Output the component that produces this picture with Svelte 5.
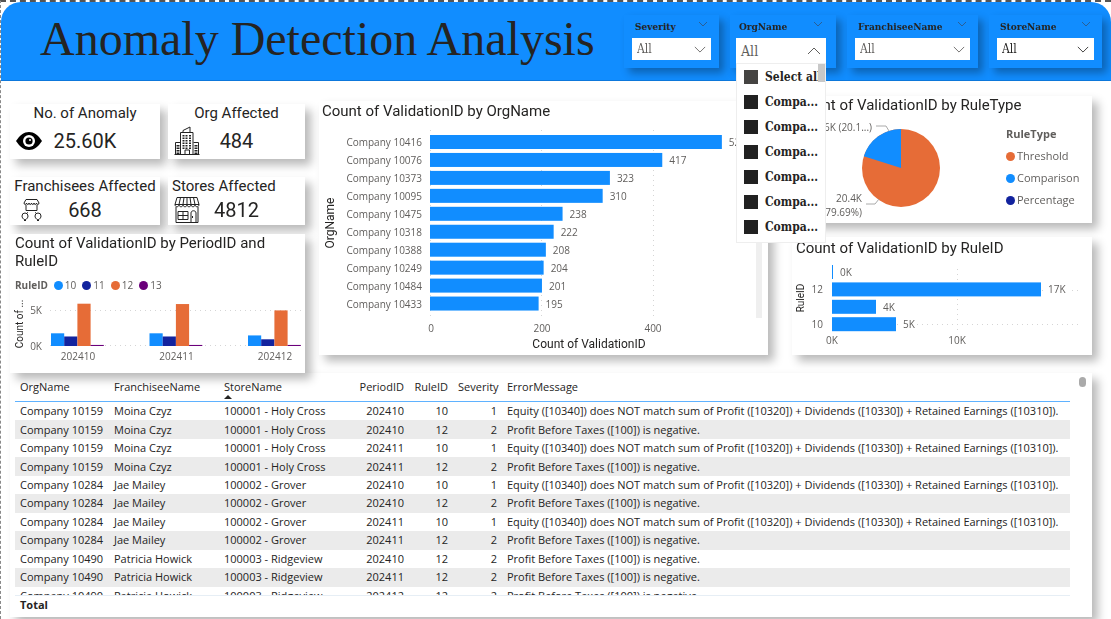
<script>
  const kpis = [
    { label: 'No. of Anomaly', value: '25.60K', icon: 'eye' },
    { label: 'Org Affected', value: '484', icon: 'building' },
    { label: 'Franchisees Affected', value: '668', icon: 'franchise' },
    { label: 'Stores Affected', value: '4812', icon: 'store' }
  ];

  const orgOptions = ['Select all', 'Compa...', 'Compa...', 'Compa...', 'Compa...', 'Compa...', 'Compa...'];

  const ruleColors = [
    { id: '10', color: '#118dff' },
    { id: '11', color: '#12239e' },
    { id: '12', color: '#e66c37' },
    { id: '13', color: '#6b007b' }
  ];

  const periods = [
    { id: '202410', values: [1800, 1350, 6000, 150] },
    { id: '202411', values: [1800, 1350, 5950, 150] },
    { id: '202412', values: [1500, 950, 5050, 150] }
  ];

  const orgs = [
    ['Company 10416', 524],
    ['Company 10076', 417],
    ['Company 10373', 323],
    ['Company 10095', 310],
    ['Company 10475', 238],
    ['Company 10318', 222],
    ['Company 10388', 208],
    ['Company 10249', 204],
    ['Company 10484', 201],
    ['Company 10433', 195]
  ];

  const rules = [
    { tick: '', width: 1, label: '0K' },
    { tick: '12', width: 209, label: '17K' },
    { tick: '', width: 44, label: '4K' },
    { tick: '10', width: 64, label: '5K' }
  ];

  const ruleTypes = [
    { name: 'Threshold', color: '#e66c37' },
    { name: 'Comparison', color: '#118dff' },
    { name: 'Percentage', color: '#12239e' }
  ];

  const equity = 'Equity ([10340]) does NOT match sum of Profit ([10320]) + Dividends ([10330]) + Retained Earnings ([10310]).';
  const profit = 'Profit Before Taxes ([100]) is negative.';

  const rows = [
    ['Company 10159', 'Moina Czyz', '100001 - Holy Cross', 202410, 10, 1, equity],
    ['Company 10159', 'Moina Czyz', '100001 - Holy Cross', 202410, 12, 2, profit],
    ['Company 10159', 'Moina Czyz', '100001 - Holy Cross', 202411, 10, 1, equity],
    ['Company 10159', 'Moina Czyz', '100001 - Holy Cross', 202411, 12, 2, profit],
    ['Company 10284', 'Jae Mailey', '100002 - Grover', 202410, 10, 1, equity],
    ['Company 10284', 'Jae Mailey', '100002 - Grover', 202410, 12, 2, profit],
    ['Company 10284', 'Jae Mailey', '100002 - Grover', 202411, 10, 1, equity],
    ['Company 10284', 'Jae Mailey', '100002 - Grover', 202411, 12, 2, profit],
    ['Company 10490', 'Patricia Howick', '100003 - Ridgeview', 202410, 12, 2, profit],
    ['Company 10490', 'Patricia Howick', '100003 - Ridgeview', 202411, 12, 2, profit],
    ['Company 10490', 'Patricia Howick', '100003 - Ridgeview', 202412, 12, 2, profit]
  ];
</script>

{#snippet chevron(up = false)}
  <svg class="chevron" viewBox="0 0 14 8" aria-hidden="true">
    <path d={up ? 'M1 7 7 1l6 6' : 'M1 1l6 6 6-6'} />
  </svg>
{/snippet}

{#snippet slicerHead(id, label)}
  <div class="slicer-head">
    <label for={id}>{label}</label>
    <svg viewBox="0 0 10 6" aria-hidden="true"><path d="M1 1l4 4 4-4" /></svg>
  </div>
{/snippet}

<div class="page">
  <header>
    <h1>Anomaly Detection Analysis</h1>
    <div class="slicers">
      <div class="slicer severity">
        {@render slicerHead('severity', 'Severity')}
        <div class="box">
          <select id="severity"><option>All</option></select>
          {@render chevron()}
        </div>
      </div>
      <div class="slicer org">
        {@render slicerHead('org', 'OrgName')}
        <div class="box open">
          <button id="org" type="button" aria-expanded="true">All</button>
          {@render chevron(true)}
          <div class="menu">
            {#each orgOptions as option, i}
              <label><input type="checkbox" class:all={i === 0} /><span>{option}</span></label>
            {/each}
            <div class="menu-thumb"></div>
          </div>
        </div>
      </div>
      <div class="slicer franchisee">
        {@render slicerHead('franchisee', 'FranchiseeName')}
        <div class="box">
          <select id="franchisee"><option>All</option></select>
          {@render chevron()}
        </div>
      </div>
      <div class="slicer store">
        {@render slicerHead('store', 'StoreName')}
        <div class="box dark">
          <select id="store"><option>All</option></select>
          {@render chevron()}
        </div>
      </div>
    </div>
  </header>

  <main>
    <div class="charts">
      <div class="left">
        <div class="kpis">
          {#each kpis as kpi}
            <section class="card kpi" class:start={kpi.icon === 'store'}>
              <h2>{kpi.label}</h2>
              <div class="kpi-row">
                {#if kpi.icon === 'eye'}
                  <svg width="26" height="20" viewBox="0 0 26 20" aria-hidden="true">
                    <path d="M0 10C4 4 8 1 13 1s9 3 13 9c-4 6-8 9-13 9S4 16 0 10z" fill="#000" />
                    <circle cx="13" cy="10" r="6" fill="#fff" />
                    <circle cx="13" cy="10" r="3.6" fill="#000" />
                    <circle cx="14" cy="9" r="1" fill="#fff" />
                  </svg>
                {:else if kpi.icon === 'building'}
                  <svg width="26" height="30" viewBox="0 0 26 30" fill="none" stroke="#222" aria-hidden="true">
                    <path d="M1.5 28.5V16.5h5M24.5 28.5V16.5h-5M0.5 28.5h25M6.5 28.5V6.500h12.5v22M9 6.500V4.500l7-3.500v5.500M11 28v-4h4.500v4" />
                    <path d="M9.500 9v14M12.500 9v14M16 9v14" stroke-width="2" stroke-dasharray="1.500 1" />
                    <path d="M4 19v9M22 19v9" stroke-width="3" stroke-dasharray="1.500 1" />
                  </svg>
                {:else if kpi.icon === 'franchise'}
                  <svg width="26" height="24" viewBox="0 0 26 24" fill="none" stroke="#222" aria-hidden="true">
                    <path d="M10 1.500h11l2 3.500c0 2-2.500 2-2.500 0 0 2-2.500 2-2.500 0 0 2-2.500 2-2.500 0 0 2-2.500 2-2.500 0 0 2-2.500 2-2.500 0 0 2-2.500 2-2.500 0zM10 7v5.500h11V7" />
                    <path d="M12 14l-2 2M19 14l2 2" stroke-dasharray="1 1" />
                    <path d="M9 22c-2-1-3-2.500-3-4a3 3 0 0 1 6 0c0 1.500-1 3-3 4zM22 22c-2-1-3-2.500-3-4a3 3 0 0 1 6 0c0 1.500-1 3-3 4zM8 22.500h2M21 22.500h2" />
                  </svg>
                {:else}
                  <svg width="26" height="26" viewBox="0 0 26 26" fill="none" stroke="#222" aria-hidden="true">
                    <path d="M3 .5h20l2 7c0 3-4 3-4 0 0 3-4 3-4 0 0 3-4 3-4 0 0 3-4 3-4 0 0 3-4 3-4 0 0 3-4 3-4 0zM6.500 .5L5 7.500M10 .5L9 7.500M13 .5v7M16 .5l1 7M19.500 .5L21 7.500M1 7.500h24" />
                    <path d="M2 10v15.500h22V10M4 14.500h10v8H4zM9 14.500v8M4 18.500h10M17 25V16c0-3 5-3 5 0v9M18.500 19v2" />
                  </svg>
                {/if}
                <strong>{kpi.value}</strong>
              </div>
            </section>
          {/each}
        </div>

        <section class="card period">
          <h2>Count of ValidationID by PeriodID and RuleID</h2>
          <div class="legend">
            <b>RuleID</b>
            {#each ruleColors as rule}
              <span><i style:background={rule.color}></i>{rule.id}</span>
            {/each}
          </div>
          <svg class="plot" viewBox="0 0 295 80" role="img" aria-label="Count by period and rule">
            <path class="grid" d="M40 17.500H291M40 52.500H291" />
            <text class="axis-title small" transform="translate(13 31) rotate(-90)" text-anchor="middle">Count of ...</text>
            <text x="32" y="21" text-anchor="end">5K</text>
            <text x="32" y="57" text-anchor="end">0K</text>
            {#each periods as period, p}
              {#each period.values as value, i}
                <rect
                  x={41 + p * 98.5 + i * 13.2}
                  y={53 - value * 0.00705}
                  width="13.2"
                  height={value * 0.00705}
                  fill={ruleColors[i].color}
                />
              {/each}
              <text x={68 + p * 98.5} y="67" text-anchor="middle">{period.id}</text>
            {/each}
          </svg>
        </section>
      </div>

      <section class="card byorg">
        <h2>Count of ValidationID by OrgName</h2>
        <svg class="plot" viewBox="0 0 449 235" role="img" aria-label="Count by organisation">
          <path class="grid" d="M111.500 10V198M222.500 10V198M334.500 10V198" />
          {#each orgs as [name, count], i}
            <text x="103" y={26 + i * 17.95} text-anchor="end">{name}</text>
            <rect x="111" y={15 + i * 17.95} width={count * 0.557} height="14" fill="#118dff" />
            <text x={118 + count * 0.557} y={26 + i * 17.95}>{count}</text>
          {/each}
          <text x="112" y="212" text-anchor="middle">0</text>
          <text x="223" y="212" text-anchor="middle">200</text>
          <text x="334" y="212" text-anchor="middle">400</text>
          <text class="axis-title" x="270" y="228" text-anchor="middle">Count of ValidationID</text>
          <text class="axis-title" transform="translate(15 103) rotate(-90)" text-anchor="middle">OrgName</text>
          <rect x="437" y="12" width="6" height="186" fill="#efefef" />
        </svg>
      </section>

      <div class="right">
        <section class="card bytype">
          <h2>Count of ValidationID by RuleType</h2>
          <div class="type-body">
            <svg class="pie" viewBox="0 0 200 109" role="img" aria-label="Count by rule type">
              <circle cx="109" cy="54" r="39" fill="#e66c37" />
              <path d="M109 54V15A39 39 0 0 0 71.8 42.300z" fill="#118dff" />
              <path d="M84 12h10l3 5M74 90h9l4-5" fill="none" stroke="#aaa" />
              <text x="80" y="17" text-anchor="end">5.16K (20.1...)</text>
              <text x="70" y="88" text-anchor="end">20.4K</text>
              <text x="70" y="102" text-anchor="end">(79.69%)</text>
            </svg>
            <div class="type-legend">
              <b>RuleType</b>
              {#each ruleTypes as type}
                <span><i style:background={type.color}></i>{type.name}</span>
              {/each}
            </div>
          </div>
        </section>

        <section class="card byrule">
          <h2>Count of ValidationID by RuleID</h2>
          <svg class="plot" viewBox="0 0 300 98" role="img" aria-label="Count by rule">
            <path class="grid" d="M165.500 12V73M40 33.500H286M40 67.500H286" />
            {#each rules as rule, i}
              <rect x="40" y={8 + i * 17.4} width={rule.width} height="14" fill="#118dff" />
              <rect x={rule.width + 46} y={8 + i * 17.4} width={rule.label.length * 7} height="14" fill="#fff" />
              <text x={rule.width + 47} y={19 + i * 17.4}>{rule.label}</text>
              <text x="31" y={19 + i * 17.4} text-anchor="end">{rule.tick}</text>
            {/each}
            <text x="40" y="87" text-anchor="middle">0K</text>
            <text x="165" y="87" text-anchor="middle">10K</text>
            <text class="axis-title small" transform="translate(12 41) rotate(-90)" text-anchor="middle">RuleID</text>
          </svg>
        </section>
      </div>
    </div>

    <section class="card details">
      <div class="scroller">
        <table>
          <thead>
            <tr>
              <th class="c-org">OrgName</th>
              <th class="c-fran">FranchiseeName</th>
              <th class="c-store sorted" aria-sort="ascending">StoreName</th>
              <th class="c-period num">PeriodID</th>
              <th class="c-rule num">RuleID</th>
              <th class="c-sev num">Severity</th>
              <th>ErrorMessage</th>
            </tr>
          </thead>
          <tbody>
            {#each rows as row}
              <tr>
                {#each row as cell, i}
                  <td class:num={i > 2 && i < 6}>{cell}</td>
                {/each}
              </tr>
            {/each}
          </tbody>
          <tfoot>
            <tr><th colspan="7">Total</th></tr>
          </tfoot>
        </table>
      </div>
      <div class="thumb"></div>
    </section>
  </main>
</div>

<style>
  :global(body) {
    margin: 0;
    background: #fff;
  }

  .page {
    border-left: 1px dashed #888;
    border-top: 2px dashed #555;
    font-family: 'Open Sans', 'Noto Sans', sans-serif;
    color: #252423;
    overflow: hidden;
  }

  h1,
  h2 {
    margin: 0;
    font-weight: 400;
  }

  header {
    position: relative;
    z-index: 3;
    display: flex;
    justify-content: space-between;
    box-sizing: border-box;
    height: 79px;
    padding: 13px 9px 0 39px;
    border-radius: 20px 20px 0 0;
    background: #118dff;
    border-bottom: 1px solid #0d78dc;
  }

  h1 {
    font: 48px/48px 'Liberation Serif', serif;
    white-space: nowrap;
  }

  .slicers {
    display: flex;
    gap: 11px;
    align-items: flex-start;
    font-family: 'DejaVu Serif Condensed', 'DejaVu Serif', serif;
  }

  .slicer {
    box-sizing: border-box;
    height: 53px;
    padding: 3px 8px 0;
    background: #118dff;
    box-shadow: 5px 5px 8px rgba(0, 0, 0, 0.3);
  }

  .severity { width: 95px; }
  .franchisee { width: 131px; }
  .store { width: 113px; }

  .org {
    width: 106px;
    padding-left: 6px;
    padding-right: 10px;
  }

  .slicer-head {
    display: flex;
    justify-content: space-between;
    align-items: center;
    height: 16px;
    margin-bottom: 4px;
    padding: 0 3px;
  }

  .slicer-head label {
    font-size: 10px;
    font-weight: 700;
  }

  .slicer-head svg {
    width: 10px;
    height: 6px;
    margin-bottom: 4px;
    fill: none;
    stroke: #2a5f96;
  }

  .box {
    position: relative;
    display: flex;
    align-items: center;
    height: 22px;
    background: #fff;
    color: #605e5c;
  }

  .box.open { height: 25px; }
  .box.dark { color: #252423; }

  .box select,
  .box button {
    appearance: none;
    flex: 1;
    min-width: 0;
    height: 100%;
    padding: 0 5px;
    border: 0;
    background: transparent;
    color: inherit;
    font-family: inherit;
    font-size: 12px;
    text-align: left;
  }

  .box button { font-size: 14px; }

  .chevron {
    position: absolute;
    right: 5px;
    width: 12px;
    height: 7px;
    fill: none;
    stroke: currentColor;
    pointer-events: none;
  }

  .open .chevron {
    width: 14px;
    height: 8px;
  }

  .menu {
    position: absolute;
    top: 100%;
    left: 0;
    right: 0;
    height: 178px;
    border: 1px solid #eee;
    background: #fff;
    color: #252423;
    overflow: hidden;
  }

  .menu label {
    display: flex;
    align-items: center;
    gap: 7px;
    height: 25px;
    padding-left: 7px;
    font-size: 12px;
    font-weight: 700;
    white-space: nowrap;
  }

  .menu input {
    appearance: none;
    flex: none;
    width: 14px;
    height: 14px;
    margin: 0;
    background: #212121;
  }

  .menu input.all { background: #454442; }

  .menu-thumb {
    position: absolute;
    top: 0;
    right: 0;
    width: 7px;
    height: 18px;
    background: #c8c8c8;
  }

  main { padding: 0 19px 2px 9px; }

  .charts {
    position: relative;
    z-index: 1;
    display: grid;
    grid-template-columns: 295fr 449fr 310fr;
    align-items: start;
    column-gap: 14px;
  }

  .card {
    background: #fff;
    box-shadow: 6px 6px 9px rgba(0, 0, 0, 0.28);
  }

  .card h2 {
    font: 15px/18px Roboto, sans-serif;
  }

  .left {
    display: grid;
    gap: 9px;
    padding-top: 23px;
  }

  .kpis {
    display: grid;
    grid-template-columns: 150fr 137fr;
    grid-template-rows: 55px 48px;
    gap: 18px 8px;
  }

  .kpi {
    display: grid;
    grid-template-rows: auto 1fr;
  }

  .kpi h2 {
    text-align: center;
    white-space: nowrap;
  }

  .kpi.start h2 {
    padding-left: 4px;
    text-align: left;
  }

  .kpi-row {
    display: grid;
    grid-template-columns: 26px 1fr 26px;
    align-items: center;
    padding: 0 6px;
  }

  .kpi strong {
    font: 20px/26px Roboto, sans-serif;
    text-align: center;
  }

  .kpi svg { display: block; }

  .period h2 { padding: 0 5px; }

  .legend {
    display: flex;
    align-items: center;
    gap: 6px;
    height: 16px;
    margin-top: 7px;
    padding: 0 5px;
    font-size: 10px;
    color: #605e5c;
  }

  .legend span,
  .type-legend span {
    display: flex;
    align-items: center;
    gap: 2px;
  }

  i {
    width: 9px;
    height: 9px;
    border-radius: 50%;
  }

  .plot {
    display: block;
    width: 100%;
  }

  svg text {
    font-size: 10px;
    fill: #605e5c;
  }

  svg .axis-title {
    font-family: Roboto, sans-serif;
    font-size: 12px;
    fill: #252423;
  }

  svg .axis-title.small { font-size: 10px; }

  .grid {
    fill: none;
    stroke: #d5d5d5;
    stroke-dasharray: 1 4;
  }

  .byorg {
    margin-top: 20px;
    padding-top: 1px;
  }

  .byorg h2 { padding: 0 3px; }

  .right {
    display: grid;
    gap: 14px;
    padding: 15px 0 0 10px;
  }

  .bytype h2 { padding: 0 4px; }
  .byrule h2 { padding: 2px 4px 0; }

  .type-body {
    display: grid;
    grid-template-columns: 200fr 100fr;
    align-items: start;
  }

  .type-legend {
    display: grid;
    gap: 6px;
    padding: 12px 0 0 14px;
    font-size: 11px;
    line-height: 16px;
    color: #605e5c;
  }

  .details {
    display: flex;
    justify-content: space-between;
    padding: 4px 6px 4px 5px;
  }

  .scroller {
    flex: 1;
    height: 236px;
    margin-right: 9px;
    overflow: hidden;
  }

  table {
    width: 100%;
    height: 246px;
    border-collapse: separate;
    border-spacing: 0;
    table-layout: fixed;
    font-size: 11px;
    line-height: 16px;
  }

  th,
  td {
    padding: 0 5px;
    text-align: left;
    font-weight: 400;
    white-space: nowrap;
  }

  thead tr { height: 25px; }

  thead th {
    position: relative;
    padding-bottom: 5px;
    border-bottom: 1px solid #5fb2ff;
  }

  .sorted::after {
    content: '';
    position: absolute;
    left: 5px;
    bottom: 2px;
    border: 4px solid transparent;
    border-top: 0;
    border-bottom-color: #252423;
  }

  .num { text-align: right; }

  .c-org { width: 84px; }
  .c-fran { width: 100px; }
  .c-store { width: 125px; }
  .c-period { width: 45px; }
  .c-rule { width: 34px; }
  .c-sev { width: 39px; }

  tbody tr:nth-child(even) { background: #ebebeb; }

  tfoot tr { height: 18px; }

  tfoot th {
    position: sticky;
    bottom: 0;
    background: #fff;
    border-top: 1px solid #e6eef5;
    font-weight: 700;
  }

  .thumb {
    width: 7px;
    height: 10px;
    border-radius: 4px;
    background: #aaa;
  }
</style>
